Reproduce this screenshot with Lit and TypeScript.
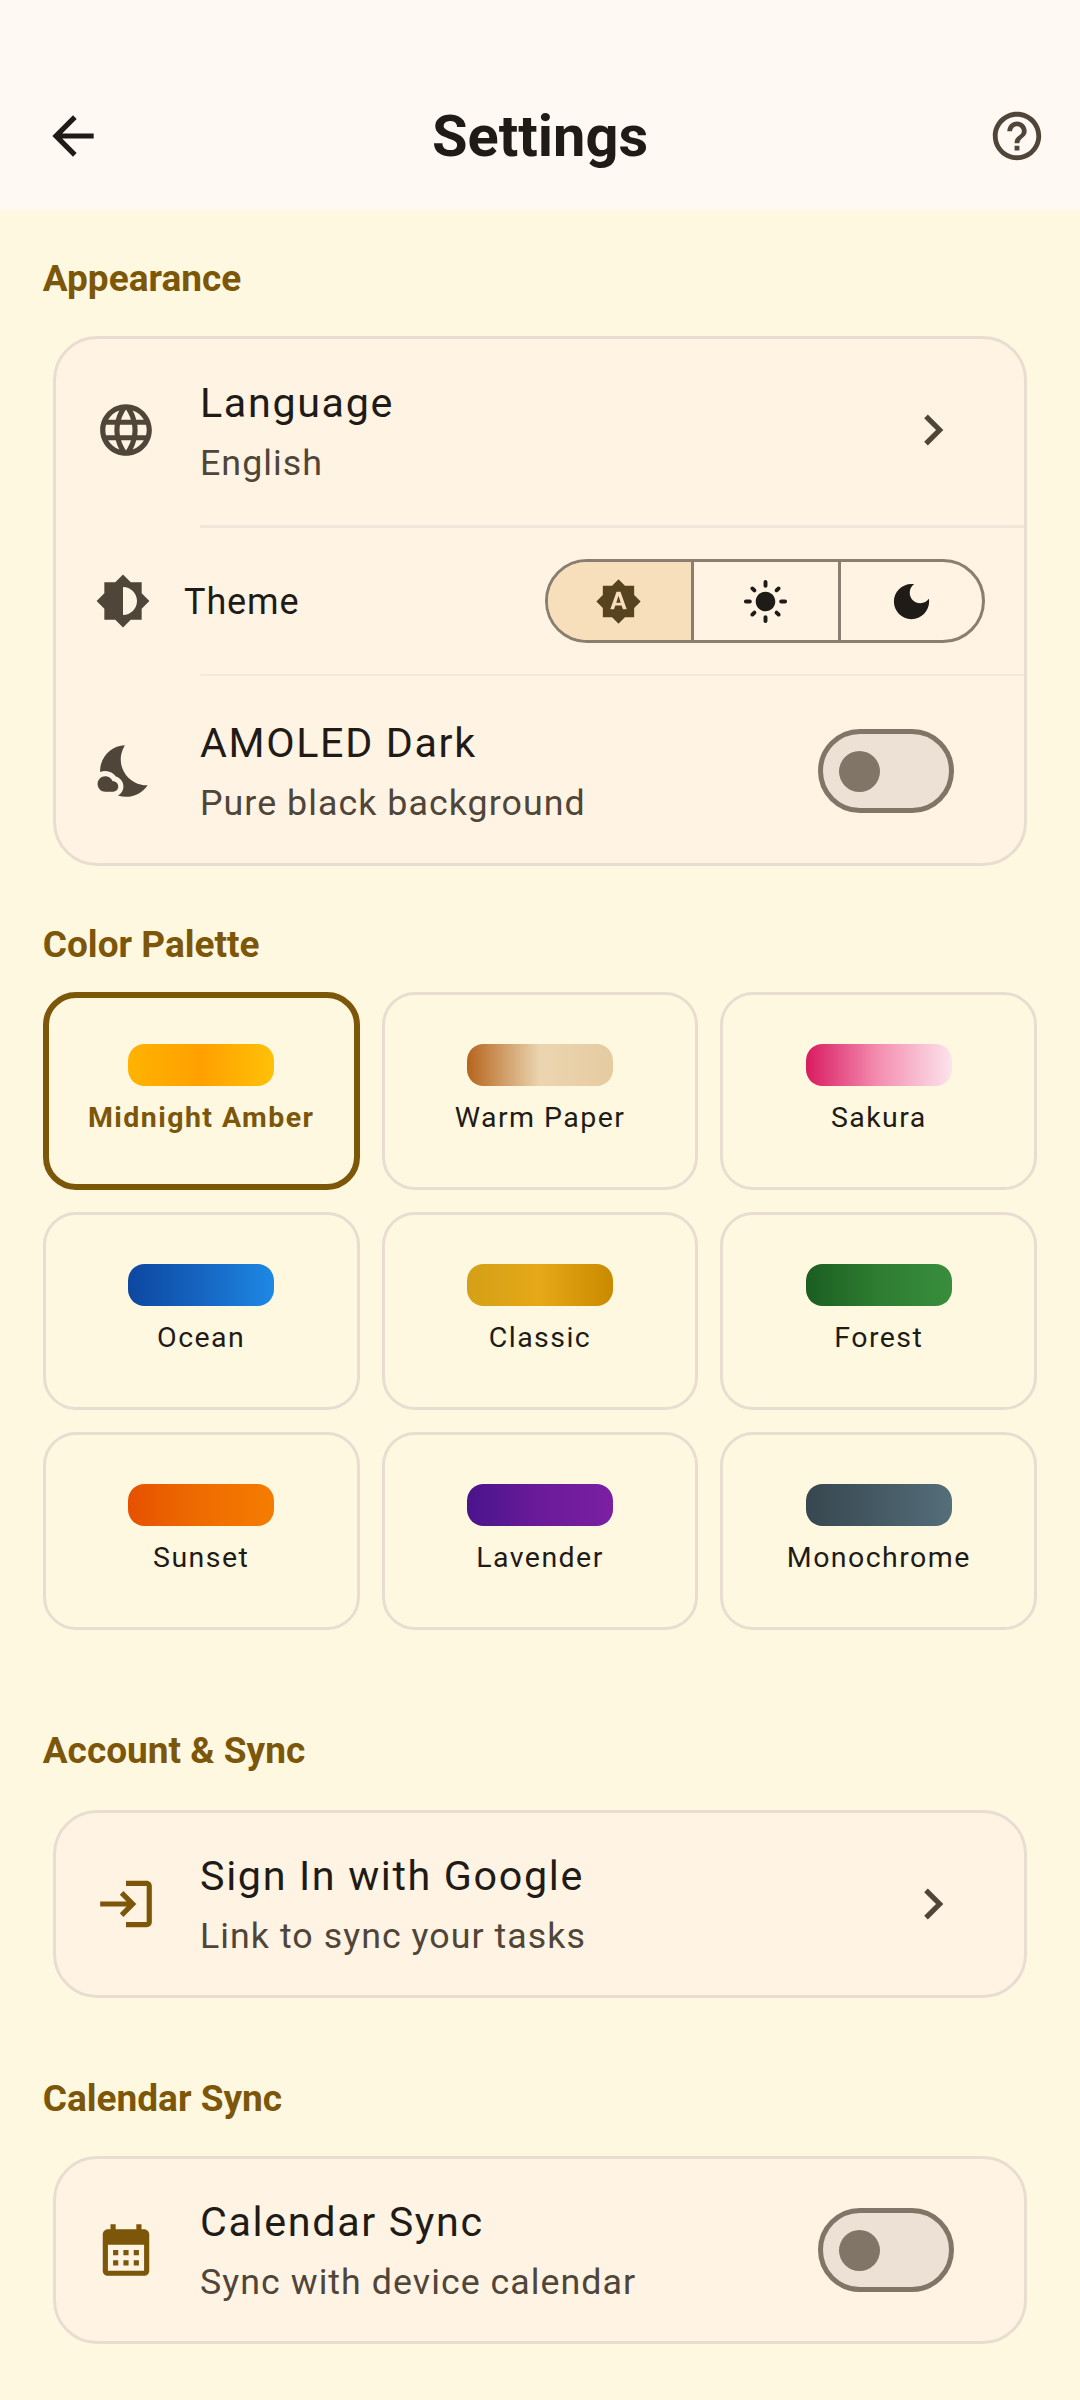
import { LitElement, html, css, svg } from 'lit';
import { customElement } from 'lit/decorators.js';
import { classMap } from 'lit/directives/class-map.js';

const ICONS = {
  back: 'M20 11H7.83l5.59-5.59L12 4l-8 8 8 8 1.41-1.41L7.83 13H20v-2z',
  help: 'M11 18h2v-2h-2v2zm1-16C6.48 2 2 6.48 2 12s4.48 10 10 10 10-4.48 10-10S17.52 2 12 2zm0 18c-4.41 0-8-3.59-8-8s3.59-8 8-8 8 3.59 8 8-3.59 8-8 8zm0-14c-2.21 0-4 1.79-4 4h2c0-1.1.9-2 2-2s2 .9 2 2c0 2-3 1.75-3 5h2c0-2.25 3-2.5 3-5 0-2.21-1.79-4-4-4z',
  language: 'M11.99 2C6.47 2 2 6.48 2 12s4.47 10 9.99 10C17.52 22 22 17.52 22 12S17.52 2 11.99 2zm6.93 6h-2.95c-.32-1.25-.78-2.45-1.38-3.56 1.84.63 3.37 1.91 4.33 3.56zM12 4.04c.83 1.2 1.48 2.53 1.91 3.96h-3.82c.43-1.43 1.08-2.76 1.91-3.96zM4.26 14C4.1 13.36 4 12.69 4 12s.1-1.36.26-2h3.38c-.08.66-.14 1.32-.14 2 0 .68.06 1.34.14 2H4.26zm.82 2h2.95c.32 1.25.78 2.45 1.38 3.56-1.84-.63-3.37-1.9-4.33-3.56zm2.95-8H5.08c.96-1.66 2.49-2.93 4.33-3.56C8.81 5.55 8.35 6.75 8.03 8zM12 19.96c-.83-1.2-1.48-2.53-1.91-3.96h3.82c-.43 1.43-1.08 2.76-1.91 3.96zM14.34 14H9.66c-.09-.66-.16-1.32-.16-2 0-.68.07-1.35.16-2h4.68c.09.65.16 1.32.16 2 0 .68-.07 1.34-.16 2zm.25 5.56c.6-1.11 1.06-2.31 1.38-3.56h2.95c-.96 1.65-2.49 2.93-4.33 3.56zM16.36 14c.08-.66.14-1.32.14-2 0-.68-.06-1.34-.14-2h3.38c.16.64.26 1.31.26 2s-.1 1.36-.26 2h-3.38z',
  chevron: 'M10 6L8.59 7.41 13.17 12l-4.58 4.59L10 18l6-6z',
  brightness: 'M20 15.31L23.31 12 20 8.69V4h-4.69L12 .69 8.69 4H4v4.69L.69 12 4 15.31V20h4.69L12 23.31 15.31 20H20v-4.69zM12 18V6c3.31 0 6 2.69 6 6s-2.69 6-6 6z',
  auto: 'M10.85 12.65h2.3L12 9l-1.15 3.65zM20 8.69V4h-4.69L12 .69 8.69 4H4v4.69L.69 12 4 15.31V20h4.69L12 23.31 15.31 20H20v-4.69L23.31 12 20 8.69zM14.3 16l-.7-2h-3.2l-.7 2H7.8L11 7h2l3.2 9h-1.9z',
  light: 'M12 7c-2.76 0-5 2.24-5 5s2.24 5 5 5 5-2.24 5-5-2.24-5-5-5zM2 13h2c.55 0 1-.45 1-1s-.45-1-1-1H2c-.55 0-1 .45-1 1s.45 1 1 1zm18 0h2c.55 0 1-.45 1-1s-.45-1-1-1h-2c-.55 0-1 .45-1 1s.45 1 1 1zM11 2v2c0 .55.45 1 1 1s1-.45 1-1V2c0-.55-.45-1-1-1s-1 .45-1 1zm0 18v2c0 .55.45 1 1 1s1-.45 1-1v-2c0-.55-.45-1-1-1s-1 .45-1 1zM5.99 4.58c-.39-.39-1.03-.39-1.41 0-.39.39-.39 1.03 0 1.41l1.06 1.06c.39.39 1.03.39 1.41 0s.39-1.03 0-1.41L5.99 4.58zm12.37 12.37c-.39-.39-1.03-.39-1.41 0-.39.39-.39 1.03 0 1.41l1.06 1.06c.39.39 1.03.39 1.41 0 .39-.39.39-1.03 0-1.41l-1.06-1.06zm1.06-10.96c.39-.39.39-1.03 0-1.41-.39-.39-1.03-.39-1.41 0l-1.06 1.06c-.39.39-.39 1.03 0 1.41s1.03.39 1.41 0l1.06-1.06zM7.05 18.36c.39-.39.39-1.03 0-1.41-.39-.39-1.03-.39-1.41 0l-1.06 1.06c-.39.39-.39 1.03 0 1.41s1.03.39 1.41 0l1.06-1.06z',
  dark: 'M12 3c-4.97 0-9 4.03-9 9s4.03 9 9 9 9-4.03 9-9c0-.46-.04-.92-.1-1.36-.98 1.37-2.58 2.26-4.4 2.26-2.98 0-5.4-2.42-5.4-5.4 0-1.81.89-3.42 2.26-4.4-.44-.06-.9-.1-1.36-.1z',
  nights: 'M11.1 12.08C8.77 7.57 10.6 3.6 11.63 2.01 6.27 2.2 1.98 6.59 1.98 12c0 .14.02.28.02.42C2.62 12.15 3.29 12 4 12c1.66 0 3.18.83 4.1 2.15C9.77 14.63 11 16.17 11 18c0 1.52-.87 2.83-2.12 3.51.98.32 2.03.5 3.12.5 3.5 0 6.58-1.8 8.37-4.52-2.36.23-6.98-.97-9.27-5.41zM7 16h-.18C6.4 14.84 5.3 14 4 14c-1.66 0-3 1.34-3 3s1.34 3 3 3h3c1.1 0 2-.9 2-2s-.9-2-2-2z',
  login: 'M11 7L9.6 8.4l2.6 2.6H2v2h10.2l-2.6 2.6L11 17l5-5-5-5zm9 12h-8v2h8c1.1 0 2-.9 2-2V5c0-1.1-.9-2-2-2h-8v2h8v14z',
  calendar: 'M19 4h-1V2h-2v2H8V2H6v2H5C3.9 4 3 4.9 3 6v14c0 1.1.9 2 2 2h14c1.1 0 2-.9 2-2V6c0-1.1-.9-2-2-2zm0 16H5V10h14v10zM9 14H7v-2h2v2zm4 0h-2v-2h2v2zm4 0h-2v-2h2v2zm-8 4H7v-2h2v2zm4 0h-2v-2h2v2zm4 0h-2v-2h2v2z',
};

type IconName = keyof typeof ICONS;

const PALETTES = [
  { name: 'Midnight Amber', colors: ['#FFB300', '#FFA000', '#FFC107'], selected: true },
  { name: 'Warm Paper', colors: ['#B5651D', '#EBD5B0', '#E6CBA1'] },
  { name: 'Sakura', colors: ['#D81B60', '#F48FB1', '#FCE4EC'] },
  { name: 'Ocean', colors: ['#0D47A1', '#1565C0', '#1E88E5'] },
  { name: 'Classic', colors: ['#D4A017', '#E6A817', '#C98A00'] },
  { name: 'Forest', colors: ['#1B5E20', '#2E7D32', '#388E3C'] },
  { name: 'Sunset', colors: ['#E65100', '#EF6C00', '#F57C00'] },
  { name: 'Lavender', colors: ['#4A148C', '#6A1B9A', '#7B1FA2'] },
  { name: 'Monochrome', colors: ['#37474F', '#455A64', '#546E7A'] },
];

@customElement('app-root')
export class AppRoot extends LitElement {
  static styles = css`
    :host {
      display: block;
      min-height: 2400px;
      background: #fff8e1;
      font-family: 'Roboto', sans-serif;
      color: #1f1b16;
    }

    svg {
      display: block;
      flex: none;
      fill: currentColor;
    }

    .app-bar {
      display: grid;
      grid-template-columns: 1fr auto 1fr;
      align-items: center;
      height: 210px;
      box-sizing: border-box;
      padding: 62px 34px 0;
      background: #fff8f3;
    }

    .app-bar .back {
      margin-left: 8px;
    }

    .app-bar .help {
      justify-self: end;
      color: #4f4539;
    }

    .app-bar h1 {
      margin: 0;
      font-size: 57.75px;
      line-height: 72px;
      font-weight: 700;
    }

    main {
      padding: 0 42.75px;
    }

    h2 {
      margin: 0;
      font-size: 37px;
      line-height: 44px;
      font-weight: 700;
      color: #7c5609;
    }

    .appearance { margin-top: 47px; }
    .palette { margin-top: 57px; }
    .account { margin-top: 99px; }
    .calendar { margin-top: 79px; }

    .card {
      margin: 0 10.25px;
      border: 3px solid #e8ddd0;
      border-radius: 44px;
      background: #fff3e3;
    }

    .appearance + .card { margin-top: 35px; }
    .account + .card { margin-top: 37px; }
    .calendar + .card { margin-top: 35px; }

    .row {
      display: flex;
      align-items: center;
      height: 182px;
      box-sizing: border-box;
      padding-left: 39px;
    }

    .row.first {
      height: 186px;
      padding-bottom: 5px;
    }

    .row.first .text {
      padding-top: 3px;
    }

    .row.last {
      height: 187px;
      padding-top: 3px;
    }

    .row.theme {
      height: 146px;
    }

    .row > svg.lead {
      color: #4f4539;
    }

    .row > svg.accent {
      color: #7c5609;
    }

    .text {
      flex: 1;
      margin-left: 43px;
    }

    .title {
      font-size: 41.25px;
      line-height: 56px;
      letter-spacing: 1.65px;
    }

    .subtitle {
      margin-top: 7px;
      font-size: 35.75px;
      line-height: 50px;
      letter-spacing: 1.05px;
      color: #4f4539;
    }

    .chevron {
      margin-right: 60px;
      color: #4f4539;
    }

    .divider {
      height: 3px;
      margin-left: 144px;
      background: #f0e6da;
    }

    .divider.thin {
      height: 2px;
      background: #f3e9dd;
    }

    .theme-label {
      flex: 1;
      margin-left: 33px;
      padding-top: 2px;
      font-size: 36px;
      letter-spacing: 0.9px;
    }

    .segments {
      display: grid;
      grid-template-columns: 143px 147px 1fr;
      width: 440px;
      height: 84px;
      box-sizing: border-box;
      margin-right: 39px;
      border: 3px solid #8a7e70;
      border-radius: 42px;
      overflow: hidden;
    }

    .segment {
      display: flex;
      align-items: center;
      justify-content: center;
    }

    .segment.on {
      padding-right: 2px;
      background: #f7dfbb;
      color: #57431f;
    }

    .segment + .segment {
      padding-right: 2px;
      border-left: 3px solid #8a7e70;
    }

    .segment + .segment + .segment {
      padding-right: 0;
    }

    .toggle {
      display: flex;
      align-items: center;
      width: 136px;
      height: 84px;
      box-sizing: border-box;
      margin-right: 70px;
      padding-left: 16px;
      border: 5px solid #817567;
      border-radius: 42px;
      background: #ede1d5;
    }

    .toggle::before {
      content: '';
      width: 41px;
      height: 41px;
      border-radius: 50%;
      background: #817567;
    }

    .grid {
      display: grid;
      grid-template-columns: repeat(3, 1fr);
      gap: 22px;
      margin-top: 25px;
    }

    .tile {
      display: flex;
      flex-direction: column;
      align-items: center;
      height: 198px;
      box-sizing: border-box;
      padding-top: 49px;
      border: 3px solid #e8ddd0;
      border-radius: 33px;
    }

    .tile.selected {
      padding-top: 46px;
      border: 6px solid #7c5609;
      color: #7c5609;
      font-weight: 700;
    }

    .swatch {
      width: 146px;
      height: 42px;
      border-radius: 16.5px;
    }

    .tile span {
      margin-top: 14px;
      font-size: 28.5px;
      line-height: 36px;
      letter-spacing: 1.45px;
    }
  `;

  private icon(name: IconName, size: number, cls = '') {
    return html`<svg class=${cls} width=${size} height=${size} viewBox="0 0 24 24">${svg`<path d=${ICONS[name]}></path>`}</svg>`;
  }

  private rowText(title: string, subtitle: string) {
    return html`
      <div class="text">
        <div class="title">${title}</div>
        <div class="subtitle">${subtitle}</div>
      </div>
    `;
  }

  render() {
    return html`
      <header class="app-bar">
        ${this.icon('back', 62, 'back')}
        <h1>Settings</h1>
        ${this.icon('help', 58, 'help')}
      </header>
      <main>
        <h2 class="appearance">Appearance</h2>
        <section class="card">
          <div class="row first">
            ${this.icon('language', 62, 'lead')}
            ${this.rowText('Language', 'English')}
            ${this.icon('chevron', 62, 'chevron')}
          </div>
          <div class="divider"></div>
          <div class="row theme">
            ${this.icon('brightness', 56, 'lead')}
            <div class="theme-label">Theme</div>
            <div class="segments">
              <div class="segment on">${this.icon('auto', 47)}</div>
              <div class="segment">${this.icon('light', 47)}</div>
              <div class="segment">${this.icon('dark', 47)}</div>
            </div>
          </div>
          <div class="divider thin"></div>
          <div class="row last">
            ${this.icon('nights', 62, 'lead')}
            ${this.rowText('AMOLED Dark', 'Pure black background')}
            <div class="toggle"></div>
          </div>
        </section>

        <h2 class="palette">Color Palette</h2>
        <div class="grid">
          ${PALETTES.map(
            (p) => html`
              <div class=${classMap({ tile: true, selected: !!p.selected })}>
                <div class="swatch" style="background: linear-gradient(to right, ${p.colors.join(', ')})"></div>
                <span>${p.name}</span>
              </div>
            `,
          )}
        </div>

        <h2 class="account">Account &amp; Sync</h2>
        <section class="card">
          <div class="row">
            ${this.icon('login', 62, 'accent')}
            ${this.rowText('Sign In with Google', 'Link to sync your tasks')}
            ${this.icon('chevron', 62, 'chevron')}
          </div>
        </section>

        <h2 class="calendar">Calendar Sync</h2>
        <section class="card">
          <div class="row">
            ${this.icon('calendar', 62, 'accent')}
            ${this.rowText('Calendar Sync', 'Sync with device calendar')}
            <div class="toggle"></div>
          </div>
        </section>
      </main>
    `;
  }
}
